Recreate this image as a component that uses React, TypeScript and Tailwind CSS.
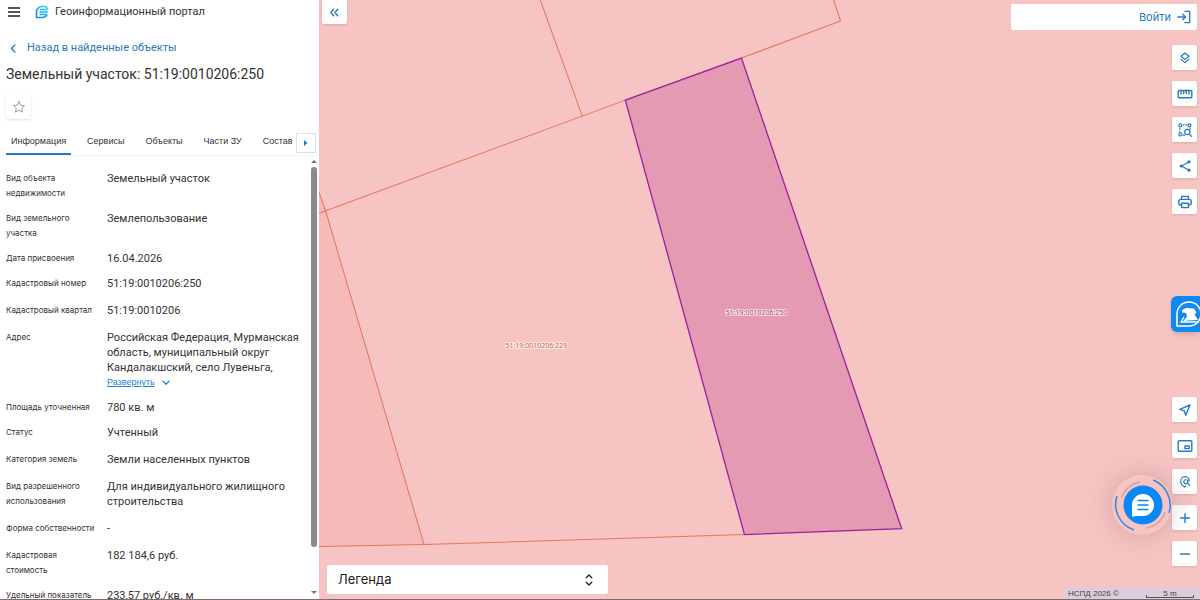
import React, { useState } from "react";

interface Field {
  label: string;
  value: string;
  compact?: boolean;
  expandable?: boolean;
}

const tabs = ["Информация", "Сервисы", "Объекты", "Части ЗУ", "Состав"];

const fields: Field[] = [
  { label: "Вид объекта недвижимости", value: "Земельный участок", compact: true },
  { label: "Вид земельного участка", value: "Землепользование", compact: true },
  { label: "Дата присвоения", value: "16.04.2026", compact: true },
  { label: "Кадастровый номер", value: "51:19:0010206:250" },
  { label: "Кадастровый квартал", value: "51:19:0010206" },
  {
    label: "Адрес",
    value: "Российская Федерация, Мурманская область, муниципальный округ Кандалакшский, село Лувеньга,",
    compact: true,
    expandable: true,
  },
  { label: "Площадь уточненная", value: "780 кв. м", compact: true },
  { label: "Статус", value: "Учтенный" },
  { label: "Категория земель", value: "Земли населенных пунктов" },
  { label: "Вид разрешенного использования", value: "Для индивидуального жилищного строительства" },
  { label: "Форма собственности", value: "-" },
  { label: "Кадастровая стоимость", value: "182 184,6 руб.", compact: true },
  { label: "Удельный показатель", value: "233,57 руб./кв. м" },
];

interface IconProps {
  size?: number;
  width?: number;
  children: React.ReactNode;
}

const Icon: React.FC<IconProps> = ({ size = 16, width = 1.4, children }) => (
  <svg
    width={size}
    height={size}
    viewBox="0 0 16 16"
    fill="none"
    stroke="currentColor"
    strokeWidth={width}
    strokeLinecap="round"
    strokeLinejoin="round"
    aria-hidden="true"
  >
    {children}
  </svg>
);

const topTools = [
  {
    name: "Слои",
    icon: (
      <Icon width={1.2}>
        <path d="M8 3 12 6.300 8 9.600 4 6.300z" />
        <path d="M4 9.300 8 12.600l4-3.300" />
      </Icon>
    ),
  },
  {
    name: "Измерения",
    icon: (
      <Icon>
        <rect x="1.2" y="4.5" width="13.6" height="7.2" rx="1" />
        <path d="M4 5v3M6.7 5v2.6M9.3 5v2.6M12 5v3" />
      </Icon>
    ),
  },
  {
    name: "Поиск по области",
    icon: (
      <Icon width={1.2}>
        <circle cx="3.4" cy="3.4" r="1.5" />
        <circle cx="12.4" cy="3.4" r="1.5" />
        <circle cx="3.4" cy="12.4" r="1.5" />
        <path d="M6.4 2.8h.8M8.800 2.8h.8M2.8 6.6v.6M2.8 9v.6M6.3 13.2h1.4M13 6.2v.6" />
        <circle cx="10.3" cy="10" r="2.7" />
        <path d="m12.4 12.1 2.2 2.2" />
      </Icon>
    ),
  },
  {
    name: "Поделиться",
    icon: (
      <Icon width={1.2}>
        <path d="m12 4-7.500 4 7.500 4.200" />
        <circle cx="12" cy="3.800" r="1" fill="currentColor" />
        <circle cx="4.200" cy="8" r="1" fill="currentColor" />
        <circle cx="12" cy="12.200" r="1" fill="currentColor" />
      </Icon>
    ),
  },
  {
    name: "Печать",
    icon: (
      <Icon>
        <path d="M4.600 5V2.400h6.800V5M4.600 11H3.200a1.400 1.400 0 0 1-1.400-1.400V7.200A1.800 1.800 0 0 1 3.600 5.400h8.800a1.800 1.800 0 0 1 1.800 1.800v2.400a1.400 1.400 0 0 1-1.400 1.400h-1.400" />
        <path d="M4.600 9.200h6.800v4.400H4.600z" />
      </Icon>
    ),
  },
];

const bottomTools = [
  {
    name: "Моё местоположение",
    icon: (
      <Icon>
        <path d="M13 3 2.800 7.400l4.400 1.400 1.600 4.400z" />
      </Icon>
    ),
  },
  {
    name: "Обзорная карта",
    icon: (
      <Icon>
        <rect x="1.200" y="2.800" width="13.600" height="10.400" rx="1" />
        <path d="M8 8h4.200v2.600H8z" />
      </Icon>
    ),
  },
  {
    name: "Поиск на карте",
    icon: (
      <Icon width={1.1}>
        <path d="M7.600 13C5 11.600 3.700 9.400 3.700 7.200a4.300 4.300 0 0 1 8.600-.6M7.600 13l1-.8" />
        <circle cx="8.800" cy="7.800" r="2" />
        <path d="M10.800 6v3.400l2 2" />
      </Icon>
    ),
  },
  {
    name: "Приблизить",
    icon: (
      <Icon>
        <path d="M8 3.600v8.800M3.600 8h8.800" />
      </Icon>
    ),
  },
  {
    name: "Отдалить",
    icon: (
      <Icon>
        <path d="M3.600 8h8.800" />
      </Icon>
    ),
  },
];

const ToolButton: React.FC<{ name: string; children: React.ReactNode }> = ({ name, children }) => (
  <button
    type="button"
    aria-label={name}
    className="flex size-[25px] items-center justify-center rounded-xs bg-white text-[#2a79c6] shadow-sm"
  >
    {children}
  </button>
);

const Logo: React.FC = () => (
  <svg width="14" height="14" viewBox="0 0 14 14" fill="none" aria-hidden="true">
    <defs>
      <linearGradient id="logo" x1="0" y1="14" x2="14" y2="0" gradientUnits="userSpaceOnUse">
        <stop stopColor="#1778e8" />
        <stop offset="0.6" stopColor="#22b5ea" />
        <stop offset="1" stopColor="#4ce3e0" />
      </linearGradient>
    </defs>
    <path d="M1.500 12.500V7a5.500 5.500 0 0 1 5.500-5.500h3.500L13 4" stroke="url(#logo)" strokeWidth="1.700" />
    <path d="M1 12.500h6a6 6 0 0 0 5.200-3" stroke="url(#logo)" strokeWidth="1.700" />
    <path d="M5 4.500h7.500M4.500 7h8.500M4.500 9.500h7.500" stroke="url(#logo)" strokeWidth="1.500" />
  </svg>
);

const ParcelMap: React.FC = () => (
  <svg
    viewBox="0 0 880 600"
    preserveAspectRatio="xMinYMin slice"
    className="absolute inset-0 size-full"
    role="img"
    aria-label="Карта"
  >
    <rect width="880" height="600" fill="#f6c4c3" />
    <path d="M0 192 7 212 105 544 0 546z" fill="#f6bab8" />
    <g fill="none" stroke="#e8735c" strokeWidth="1">
      <path d="M514 0 521 21 422 58 306 100 263 116 0 213" />
      <path d="M221 0 263 116" />
      <path d="M0 192 7 212 105 544" />
      <path d="M0 546 105 544 425 534" />
    </g>
    <path d="M306 100 422 58 582 528 425 534z" fill="#e59ab4" stroke="#9c1f9c" strokeWidth="1.300" />
    <g
      fontFamily="Noto Sans, sans-serif"
      fontSize="7"
      textAnchor="middle"
      stroke="#ffffff"
      strokeOpacity="0.6"
      strokeWidth="2"
      paintOrder="stroke"
    >
      <text x="217" y="348" fill="#c96a50">51:19:0010206:229</text>
      <text x="437" y="315" fill="#b5506f">51:19:0010206:250</text>
    </g>
  </svg>
);

const ObjectPanel: React.FC = () => {
  const [active, setActive] = useState(tabs[0]);

  return (
    <aside className="flex w-[319px] shrink-0 flex-col bg-white">
      <header className="flex h-6 items-center pl-2">
        <button type="button" aria-label="Меню" className="text-[#222]">
          <svg width="12" height="10" viewBox="0 0 12 10" stroke="currentColor" strokeWidth="1.5" aria-hidden="true">
            <path d="M0 1h12M0 5h12M0 9h12" />
          </svg>
        </button>
        <div className="ml-[15px] flex items-center gap-1.5 text-[11px]">
          <Logo />
          Геоинформационный портал
        </div>
      </header>

      <a href="#results" className="mt-4 ml-2 flex h-4 items-center gap-2 text-[11px] text-[#2a79c6]">
        <Icon size={11} width={2}>
          <path d="M10 3 5 8l5 5" />
        </Icon>
        Назад в найденные объекты
      </a>
      <h1 className="mt-2 ml-1.5 text-[14px] leading-5">Земельный участок: 51:19:0010206:250</h1>
      <button
        type="button"
        aria-label="В избранное"
        className="mt-2.5 ml-1.5 flex size-[25px] items-center justify-center rounded-xs bg-white text-[#999] shadow-sm"
      >
        <Icon size={14} width={1.1}>
          <path d="m8 1.800 1.900 4.100 4.500.5-3.300 3.100.9 4.400L8 11.700l-4 2.200.9-4.400L1.600 6.400l4.500-.5z" />
        </Icon>
      </button>

      <div className="mt-[11px] mr-[3px] ml-1.5 flex h-[26px] items-stretch border-b border-gray-100">
        <div
          role="tablist"
          className="flex min-w-0 flex-1 gap-[11px] overflow-hidden font-['Liberation_Sans',sans-serif] text-[9px]"
        >
          {tabs.map((tab) => (
            <button
              key={tab}
              type="button"
              role="tab"
              aria-selected={tab === active}
              onClick={() => setActive(tab)}
              className={
                tab === active
                  ? "shrink-0 border-b-2 border-[#2a79c6] px-[5px]"
                  : "shrink-0 border-b-2 border-transparent px-[5px]"
              }
            >
              {tab}
            </button>
          ))}
        </div>
        <button
          type="button"
          aria-label="Следующие вкладки"
          className="flex size-5 shrink-0 items-center justify-center self-center border border-[#d5e4f5] text-[#2a79c6]"
        >
          <svg width="4" height="6" viewBox="0 0 4 6" fill="currentColor" aria-hidden="true">
            <path d="M0 0 3.500 3 0 6z" />
          </svg>
        </button>
      </div>

      <div className="flex min-h-0 flex-1">
        <dl className="flex-1 overflow-hidden pt-[15px] pl-1.5">
          {fields.map((field) => (
            <div key={field.label} className={field.compact ? "flex pb-2.5" : "flex pb-3"}>
              <dt className="w-[101px] shrink-0 pr-2 font-['Inter',sans-serif] text-[8px] leading-[15px]">
                {field.label}
              </dt>
              <dd className="w-[200px] text-[11px] leading-[15px]">
                {field.value}
                {field.expandable && (
                  <button
                    type="button"
                    className="flex items-center gap-1.5 font-['Liberation_Sans',sans-serif] text-[9px] leading-[15px] text-[#1c7fe0]"
                  >
                    <span className="underline">Развернуть</span>
                    <Icon size={10} width={2}>
                      <path d="m3 5 5 5 5-5" />
                    </Icon>
                  </button>
                )}
              </dd>
            </div>
          ))}
        </dl>
        <div className="mr-0.5 flex w-1.5 flex-col items-center text-[#777]" aria-hidden="true">
          <svg width="6" height="10" viewBox="0 0 6 10" fill="currentColor">
            <path d="M0 7 3 4l3 3z" />
          </svg>
          <div className="mt-px h-[380px] w-1.5 rounded-full bg-[#8a8a8a]" />
          <svg width="6" height="12" viewBox="0 0 6 12" fill="currentColor" className="mt-auto">
            <path d="M0 4h6L3 7z" />
          </svg>
        </div>
      </div>
    </aside>
  );
};

const App: React.FC = () => {
  return (
    <div className="flex h-screen overflow-hidden border-b border-[#77706f] font-['Roboto',sans-serif] text-[#333]">
      <ObjectPanel />

      <main className="relative flex min-w-0 flex-1 justify-between overflow-hidden bg-[#f6c4c3]">
        <ParcelMap />

        <div className="relative flex flex-col justify-between pl-[3px]">
          <button
            type="button"
            aria-label="Свернуть панель"
            className="flex h-6 w-[25px] items-center justify-center rounded-b-xs bg-white text-[#2a79c6] shadow-sm"
          >
            <Icon size={13} width={1.8}>
              <path d="M7 4 3.500 8 7 12M12 4 8.500 8l3.500 4" />
            </Icon>
          </button>
          <button
            type="button"
            className="mb-[5px] ml-[5px] flex h-[29px] w-[281px] items-center justify-between rounded-xs bg-white pr-3 pl-[11px] font-['Inter',sans-serif] text-[13px] text-[#222]"
          >
            Легенда
            <Icon size={14} width={1.5}>
              <path d="m4.800 5.400 3.200-3.200 3.200 3.200M4.800 10.600 8 13.800l3.200-3.200" />
            </Icon>
          </button>
        </div>

        <div className="relative flex flex-col items-end pt-1">
          <div className="mr-[3px] flex h-[26px] w-[186px] items-center justify-end rounded-xs bg-white pr-1.5 font-['Inter',sans-serif] text-[11px] text-[#2a79c6]">
            <button type="button" className="flex items-center gap-1.5">
              Войти
              <Icon size={14} width={1.5}>
                <path d="M1 8h8.500M6.500 4.800 9.700 8l-3.200 3.200M9 1.500h5.500v13H9" />
              </Icon>
            </button>
          </div>

          <div className="mt-[15px] mr-[3px] flex flex-col gap-[11px]">
            {topTools.map((tool) => (
              <ToolButton key={tool.name} name={tool.name}>
                {tool.icon}
              </ToolButton>
            ))}
          </div>

          <button
            type="button"
            aria-label="Помощник"
            className="absolute top-[296px] right-0 h-9 w-[29px] overflow-hidden rounded-l-md bg-[#1089f5] shadow-md"
          >
            <svg width="29" height="36" viewBox="0 0 29 36" fill="none" aria-hidden="true">
              <path d="M6 30V18a12 12 0 1 1 12 12z" stroke="#fff" strokeWidth="1.600" />
              <path d="m11 14 4-2 8 .5 2.500 4-2 2 3.500 5.500-10 .5-5 1 4-5-1-3.500-4-.5z" fill="#fff" />
              <path d="m13 21-3 5h18" stroke="#fff" strokeWidth="1.300" />
            </svg>
          </button>

          <div className="mt-auto mr-[3px] flex flex-col gap-[11px]">
            {bottomTools.map((tool) => (
              <ToolButton key={tool.name} name={tool.name}>
                {tool.icon}
              </ToolButton>
            ))}
          </div>

          <footer className="mt-[22px] flex h-[11px] w-[136px] items-center justify-between bg-[#dccddd] pr-1.5 pl-1 font-['Liberation_Sans',sans-serif] text-[8px] leading-[11px] text-[#444]">
            <span>НСПД 2026 ©</span>
            <span className="flex h-[9px] w-12 flex-col items-center">
              <span className="h-1.5 leading-[9px]">5 m</span>
              <span className="h-[3px] w-full border-x border-b border-[#555]" />
            </span>
          </footer>
        </div>

        <button
          type="button"
          aria-label="Чат"
          className="absolute right-7 bottom-16 size-[60px] rounded-full shadow-[0_0_24px_rgba(120,60,70,0.25)]"
        >
          <svg width="60" height="60" viewBox="0 0 60 60" fill="none" aria-hidden="true">
            <circle cx="31" cy="30" r="19.500" fill="#0b87f7" />
            <path d="M41 5a27 27 0 0 1 16 33M5 21a27 27 0 0 0 17 34" stroke="#3486d6" strokeWidth="1.500" />
            <path d="M10 22a23 23 0 0 1 18-15M34 53a23 23 0 0 0 19-16" stroke="#cfa3a8" strokeWidth="1.500" />
            <path d="M20 42V30a11 11 0 1 1 11 11h-7z" fill="#fff" />
            <path d="M25.500 25.500h11M25.500 30h11M25.500 34.500h11" stroke="#0b87f7" strokeWidth="1.600" />
          </svg>
        </button>
      </main>
    </div>
  );
};

export default App;
